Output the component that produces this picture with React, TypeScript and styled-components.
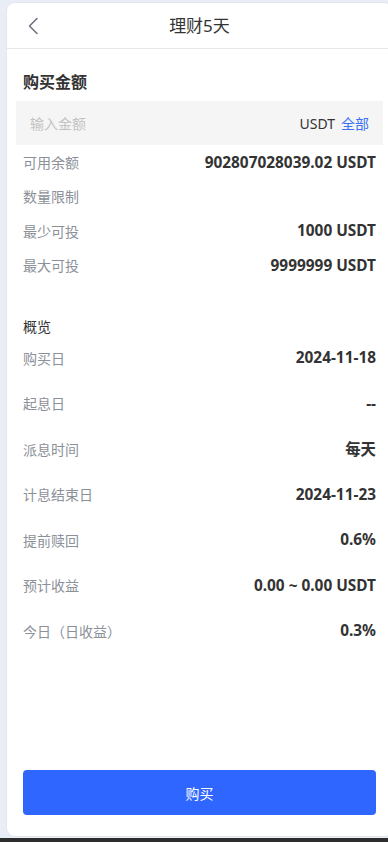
import styled, { createGlobalStyle } from "styled-components";

const GlobalStyle = createGlobalStyle`
  html, body {
    margin: 0;
    padding: 0;
    background: #eef1f6;
    overflow: hidden;
  }
  body {
    font-family: "Noto Sans", "Noto Sans CJK SC", sans-serif;
    color: #333;
  }
`;

const limits = [
  { label: "可用余额", value: "902807028039.02 USDT" },
  { label: "数量限制", value: "" },
  { label: "最少可投", value: "1000 USDT" },
  { label: "最大可投", value: "9999999 USDT" },
];

const overview = [
  { label: "购买日", value: "2024-11-18" },
  { label: "起息日", value: "--" },
  { label: "派息时间", value: "每天" },
  { label: "计息结束日", value: "2024-11-23" },
  { label: "提前赎回", value: "0.6%" },
  { label: "预计收益", value: "0.00 ~ 0.00 USDT" },
  { label: "今日（日收益）", value: "0.3%" },
];

const App = () => {
  return (
    <Page>
      <GlobalStyle />
      <Card>
        <Header>
          <BackButton>
            <svg width="12" height="18" viewBox="0 0 12 18">
              <polyline
                points="10,1.5 2.5,9 10,16.5"
                fill="none"
                stroke="#6e7480"
                strokeWidth="1.6"
                strokeLinecap="round"
                strokeLinejoin="round"
              />
            </svg>
          </BackButton>
          <Title>理财5天</Title>
        </Header>

        <Body>
          <SectionTitle>购买金额</SectionTitle>
          <AmountBox>
            <AmountInput placeholder="输入金额" />
            <Unit>USDT</Unit>
            <AllLink>全部</AllLink>
          </AmountBox>

          {limits.map((item) => (
            <Row key={item.label}>
              <Label>{item.label}</Label>
              <Value>{item.value}</Value>
            </Row>
          ))}

          <OverviewTitle>概览</OverviewTitle>
          {overview.map((item) => (
            <Row key={item.label} tall>
              <Label>{item.label}</Label>
              <Value>{item.value}</Value>
            </Row>
          ))}
        </Body>

        <Footer>
          <BuyButton>购买</BuyButton>
        </Footer>
      </Card>
      <BottomBar />
    </Page>
  );
};

const Page = styled.div`
  display: flex;
  flex-direction: column;
  align-items: flex-start;
  height: 842px;
  padding: 3px 0 0 7px;
  box-sizing: border-box;
  background: #e9edf5;
`;

const Card = styled.div`
  display: flex;
  flex-direction: column;
  width: 385px;
  min-width: 385px;
  height: 833px;
  background: #fff;
  border-radius: 8px;
  box-shadow: 0 0 0 1px #e4e6ea;
  flex-shrink: 0;
`;

const Header = styled.div`
  position: relative;
  display: flex;
  align-items: center;
  justify-content: center;
  height: 45px;
  border-bottom: 1px solid #e6e8ec;
  flex-shrink: 0;
`;

const BackButton = styled.span`
  position: absolute;
  left: 20px;
  top: 14px;
  display: flex;
`;

const Title = styled.div`
  font-size: 17px;
  color: #333;
  line-height: 24px;
`;

const Body = styled.div`
  flex: 1;
  display: flex;
  flex-direction: column;
  padding: 22px 16px 0;
`;

const SectionTitle = styled.div`
  font-size: 16px;
  font-weight: 700;
  line-height: 22px;
  color: #333;
  margin-bottom: 8px;
`;

const AmountBox = styled.div`
  display: flex;
  align-items: center;
  height: 44px;
  margin: 0 -7px;
  padding: 0 14px;
  background: #f5f5f5;
`;

const AmountInput = styled.input`
  flex: 1;
  min-width: 0;
  border: none;
  outline: none;
  background: transparent;
  font-family: inherit;
  font-size: 14px;
  color: #333;
  padding: 0;
  &::placeholder {
    color: #c3c3c3;
  }
`;

const Unit = styled.span`
  font-size: 14px;
  color: #333;
`;

const AllLink = styled.span`
  font-size: 14px;
  color: #3a72f5;
  margin-left: 6px;
`;

const Row = styled.div<{ tall?: boolean }>`
  display: flex;
  align-items: center;
  justify-content: space-between;
  height: ${(p) => (p.tall ? "45.5px" : "34.3px")};
  flex-shrink: 0;
`;

const Label = styled.span`
  font-size: 14px;
  color: #8b9099;
`;

const Value = styled.span`
  font-size: 15.4px;
  font-weight: 700;
  color: #333;
`;

const OverviewTitle = styled.div`
  font-size: 14px;
  color: #333;
  line-height: 18px;
  margin: 36px 0 -1px;
`;

const Footer = styled.div`
  padding: 0 16px 21px;
`;

const BuyButton = styled.button`
  width: 100%;
  height: 45px;
  border: none;
  border-radius: 4px;
  background: #2e66ff;
  color: #fff;
  font-family: inherit;
  font-size: 14px;
`;

const BottomBar = styled.div`
  align-self: stretch;
  margin: 2px 0 0 -7px;
  flex: 1;
  background: #2d2d2d;
`;

export default App;
